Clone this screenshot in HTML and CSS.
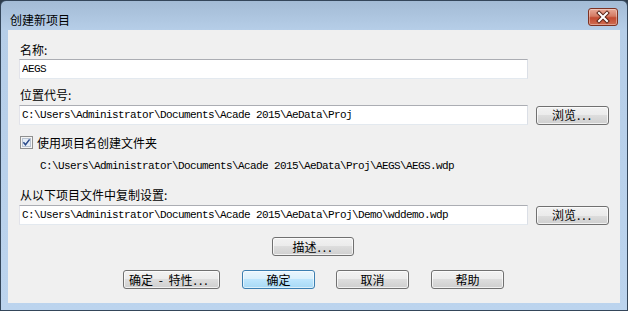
FILE: index.html
```html
<!DOCTYPE html>
<html lang="zh-CN">
<head>
  <meta charset="UTF-8">
  <title>创建新项目</title>
  <link rel="stylesheet" href="styles.css">
</head>
<body>

<div class="window">
  <div class="titlebar">
    <span class="title">创建新项目</span>
    <div class="close-btn">
      <svg width="30" height="18" viewBox="0 0 30 18">
        <path d="M11 5 L19 13 M19 5 L11 13" stroke="#5a2418" stroke-width="4" stroke-linecap="square" fill="none"/>
        <path d="M11 5 L19 13 M19 5 L11 13" stroke="#ffffff" stroke-width="2" stroke-linecap="square" fill="none"/>
      </svg>
    </div>
  </div>

  <div class="client">
    <div class="label lbl-first">名称:</div>
    <div class="row row-tight">
      <input type="text" class="campo" value="AEGS" />
    </div>

    <div class="label lbl-next">位置代号:</div>
    <div class="row row-tight">
      <input type="text" class="campo" value="C:\Users\Administrator\Documents\Acade 2015\AeData\Proj" />
      <button class="btn btn-browse">浏览<span class="dots">...</span></button>
    </div>

    <div class="check-row">
      <span class="checkbox">
        <svg width="13" height="13" viewBox="0 0 13 13">
          <rect x="0.5" y="0.5" width="12" height="12" fill="#f4f4f4" stroke="#8e8f8f"/>
          <rect x="2.5" y="2.5" width="8" height="8" fill="#e6eef7" stroke="#b9c4d2"/>
          <path d="M3.4 6.2 L5.5 8.8 L9.6 3.4" stroke="#2a4a8a" stroke-width="1.5" fill="none"/>
        </svg>
      </span>
      <span class="check-label">使用项目名创建文件夹</span>
    </div>

    <div class="path-text">C:\Users\Administrator\Documents\Acade 2015\AeData\Proj\AEGS\AEGS.wdp</div>

    <div class="label lbl-copy">从以下项目文件中复制设置:</div>
    <div class="row row-tight">
      <input type="text" class="campo" value="C:\Users\Administrator\Documents\Acade 2015\AeData\Proj\Demo\wddemo.wdp" />
      <button class="btn btn-browse">浏览<span class="dots">...</span></button>
    </div>

    <div class="row row-desc">
      <button class="btn btn-desc">描述<span class="dots">...</span></button>
    </div>

    <div class="row row-actions">
      <button class="btn btn-props">确定 - 特性<span class="dots">...</span></button>
      <button class="btn btn-default">确定</button>
      <button class="btn btn-cancel">取消</button>
      <button class="btn btn-help">帮助</button>
    </div>
  </div>
</div>

</body>
</html>
```

FILE: styles.css
```css
body { margin: 0; background: #2f3d4c; font-family: "Noto Sans CJK SC", "Liberation Sans", sans-serif; }

.window {
  width: 628px; height: 311px; box-sizing: border-box;
  border: 1px solid #34465a; border-radius: 6px 6px 0 0;
  background: linear-gradient(#a3bbd5, #b6cee8 29px, #bcd4ee);
  padding: 0 7px 7px 7px;
  display: flex; flex-direction: column;
}

.titlebar { height: 29px; display: flex; align-items: flex-start; justify-content: space-between; }
.title { font-size: 12px; line-height: 15px; margin: 11px 0 0 2px; color: #000; }
.close-btn {
  width: 30px; height: 18px; box-sizing: border-box; margin: 7px 2px 0 0;
  border: 1px solid #7e3222; border-radius: 3px;
  background: linear-gradient(#e8a998, #d47a63 45%, #c24a31 55%, #cf6d52);
  box-shadow: inset 0 0 0 1px rgba(255,255,255,0.35);
  display: flex; align-items: center; justify-content: center;
}
.close-btn svg { display: block; margin: -1px; }

.client { flex: 1; background: #f0f0f0; padding: 12px 0 0 11px; }

.label { font-size: 12px; line-height: 15px; padding-left: 1px; color: #000; }
.lbl-next { margin-top: 8px; }
.lbl-copy { margin-top: 13px; }

.row { display: flex; align-items: center; }
.row-tight { margin-top: 2px; }
.lbl-next + .row-tight, .lbl-copy + .row-tight { margin-top: 3px; }

.campo {
  width: 509px; height: 20px; box-sizing: border-box; margin: 0;
  border: 1px solid; border-color: #abadb3 #dbdfe6 #e3e9ef #e2e3ea;
  background: #fff; padding: 0 2px;
  font-family: "Liberation Mono", monospace; font-size: 11px; letter-spacing: -0.6px; color: #000;
}
.campo:focus { outline: none; }

.btn {
  width: 73px; height: 19px; box-sizing: border-box; padding: 0;
  border: 1px solid #707070; border-radius: 3px;
  background: linear-gradient(#f2f2f2, #ebebeb 50%, #dddddd 50%, #cfcfcf);
  box-shadow: inset 0 0 0 1px rgba(255,255,255,0.7);
  font-family: "Noto Sans CJK SC", sans-serif; font-size: 12px; line-height: 16px; color: #000;
}
.dots { letter-spacing: 2px; margin-left: 1px; }
.btn-browse { margin-left: 8px; }
.btn-default {
  border-color: #3c7fb1;
  background: linear-gradient(#eaf6fd, #d9f0fc 50%, #bee6fd 50%, #a7d9f5);
  box-shadow: inset 0 0 0 1px rgba(255,255,255,0.6);
}

.check-row { display: flex; align-items: center; height: 15px; margin-top: 10px; padding-left: 1px; }
.checkbox { display: block; width: 13px; height: 13px; }
.checkbox svg { display: block; }
.check-label { font-size: 12px; line-height: 15px; margin-left: 4px; }

.path-text {
  margin-top: 9px; padding-left: 21px; line-height: 15px;
  font-family: "Liberation Mono", monospace; font-size: 11px; letter-spacing: -0.6px;
}

.row-desc { margin-top: 12px; padding-left: 253px; }
.btn-desc { width: 82px; }

.row-actions { margin-top: 14px; padding-left: 104px; }
.btn-props { width: 97px; word-spacing: 3px; text-align: left; padding-left: 5px; }
.btn-default { margin-left: 22px; }
.btn-cancel { margin-left: 21px; }
.btn-help { margin-left: 22px; }
```
